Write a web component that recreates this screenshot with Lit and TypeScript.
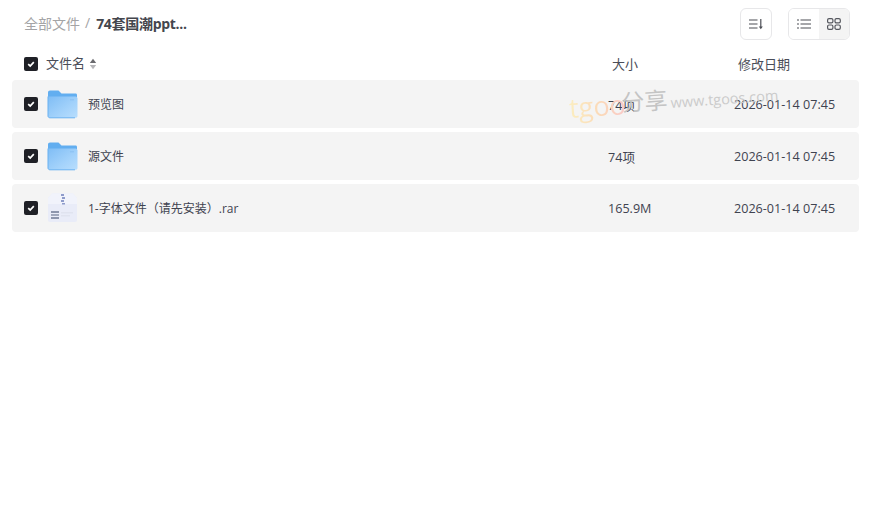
import { LitElement, html, css } from "lit";
import { customElement } from "lit/decorators.js";

const check = html`<span class="cb"><svg width="14" height="14" viewBox="0 0 14 14"><path d="M4.200 7.200 6.200 9 9.800 5.200" fill="none" stroke="#fff" stroke-width="1.700"/></svg></span>`;

const folder = html`<svg class="ic" width="31" height="30" viewBox="0 0 31 30">
  <defs><linearGradient id="fg" x1="0" y1="0" x2="1" y2="1"><stop offset="0" stop-color="#7fbdf5"/><stop offset="0.6" stop-color="#a3d2fb"/><stop offset="1" stop-color="#b9defd"/></linearGradient></defs>
  <path d="M1 3.500C1 2.400 1.800 1.500 3 1.500h8.500l3 3H28.500c1 0 1.500.6 1.500 1.500v3H1z" fill="#62aef0"/>
  <path d="M1 7.500h27.500c1 0 2 .8 2 2V27c0 1-.8 1.800-2 1.800H3c-1.200 0-2-.8-2-1.800z" fill="url(#fg)"/>
  <path d="M1 7.500V27c0 1 .8 1.800 2 1.800h25" fill="none" stroke="#69b1f1" stroke-width="1"/>
  <rect x="23" y="10" width="4" height="1.400" fill="#8fc4f4"/>
</svg>`;

const archive = html`<svg class="ic" width="31" height="32" viewBox="0 0 31 32">
  <path d="M1 6 5 1.500h21L30 6v22c0 1.200-.8 2-2 2H3c-1.200 0-2-.8-2-2z" fill="#e9ecf8"/>
  <path d="M1 6 5 1.500h21L30 6v6H1z" fill="#f1f3fb"/>
  <path d="M14 2h3v2h-3zM15 5h3v2h-3zM14 8h3v2h-3zM15 11h3v1.500h-3z" fill="#8f9ccb"/>
  <rect x="4" y="19" width="8" height="2" fill="#8d96ad"/><rect x="4" y="22" width="8" height="2" fill="#a1a9bd"/><rect x="4" y="25" width="8" height="2" fill="#8d96ad"/>
  <rect x="14" y="20" width="12" height="1.500" fill="#e0e3ef"/><rect x="14" y="23" width="9" height="1.500" fill="#e0e3ef"/>
</svg>`;

const rows = [
  { icon: folder, name: "预览图", size: "74项" },
  { icon: folder, name: "源文件", size: "74项" },
  { icon: archive, name: "1-字体文件（请先安装）.rar", size: "165.9M" },
];
const date = "2026-01-14 07:45";

@customElement("app-root")
export class AppRoot extends LitElement {
  static styles = css`
    :host { display: block; position: relative; width: 874px; height: 514px; background: #fff; overflow: hidden;
      font-family: "Open Sans", "Noto Sans CJK SC", sans-serif; color: #3f4350; font-size: 12px; }
    .wrap { padding: 8px 15px 0 12px; }
    .top { display: flex; align-items: center; height: 32px; padding: 0 9px 0 12px; }
    .crumb { flex: 1; display: flex; align-items: center; font-size: 14px; padding-bottom: 3px; }
    .crumb .root { color: #a4a4a6; }
    .crumb .sep { color: #a4a4a6; margin: 0 6px 0 5px; }
    .crumb .cur { color: #44464d; font-weight: 700; letter-spacing: -0.3px; }
    .btn { box-sizing: border-box; width: 32px; height: 32px; border: 1px solid #e7e7e9; border-radius: 6px; display: flex; align-items: center; justify-content: center; }
    .seg { box-sizing: border-box; margin-left: 16px; width: 62px; height: 32px; border: 1px solid #e7e7e9; border-radius: 6px; display: flex; overflow: hidden; }
    .seg span { flex: 1; display: flex; align-items: center; justify-content: center; }
    .seg .off { background: #f4f4f4; }
    .seg .on { background: #fff; }
    .grid { display: grid; grid-template-columns: 584px 126px 1fr; align-items: center; }
    .head { box-sizing: border-box; height: 40px; padding: 8px 0 0 12px; color: #4a4d58; font-size: 13px; }
    .head .n { display: flex; align-items: center; }
    .head .n b { font-weight: 400; margin-left: 8px; line-height: 16px; margin-top: -2px; }
    .head .sort { margin-left: 4px; }
    .head .s { padding: 0 0 2px 4px; }
    .head .d { padding: 0 0 2px 4px; }
    .list { display: flex; flex-direction: column; gap: 4px; }
    .row { height: 48px; padding-left: 12px; background: #f4f4f4; border-radius: 4px; }
    .row .n { display: flex; align-items: center; }
    .row .ic { margin-left: 9px; flex: none; }
    .row .t { margin-left: 10px; }
    .row .m { font-size: 12.6px; }
    .cb { width: 14px; height: 14px; border-radius: 2px; background: #1f2026; display: inline-flex; flex: none; }
    .wm { position: absolute; left: 570px; top: 86px; display: flex; align-items: baseline; gap: 4px; transform: rotate(-4deg); transform-origin: left bottom; pointer-events: none; white-space: nowrap; }
    .wm .a { font-size: 27px; background: linear-gradient(90deg, #fbeec0, #fbd9b8 55%, #f9c9c9); -webkit-background-clip: text; background-clip: text; color: transparent; transform: translateY(3px); }
    .wm .b { font-size: 23px; color: #c4c4c4; margin-left: -8px; }
    .wm .c { font-size: 14.500px; color: #cbcbcb; margin-left: -1px; }
  `;

  render() {
    return html`
      <div class="wrap">
        <div class="top">
          <div class="crumb"><span class="root">全部文件</span><span class="sep">/</span><span class="cur">74套国潮ppt...</span></div>
          <div class="btn"><svg width="16" height="14" viewBox="0 0 16 14"><path d="M1 3h8.500M1 7h8.500M1 11h8.500M12.800 2v9" fill="none" stroke="#4c4e55" stroke-width="1.200"/><path d="M10.800 9.500h4l-2 2.700z" fill="#4c4e55"/></svg></div>
          <div class="seg">
            <span class="on"><svg width="14" height="12" viewBox="0 0 14 12"><path d="M3.500 2H14M3.500 6H14M3.500 10H14M0 2h2M0 6h2M0 10h2" fill="none" stroke="#4c4e55" stroke-width="1.200"/></svg></span>
            <span class="off"><svg width="14" height="12" viewBox="0 0 14 12"><g fill="none" stroke="#55575e" stroke-width="1.200"><rect x=".6" y=".6" width="5.300" height="4.300" rx="1.400"/><rect x="8" y=".6" width="5.300" height="4.300" rx="1.400"/><rect x=".6" y="7" width="5.300" height="4.300" rx="1.400"/><rect x="8" y="7" width="5.300" height="4.300" rx="1.400"/></g></svg></span>
          </div>
        </div>
        <div class="grid head">
          <div class="n">${check}<b>文件名</b><svg class="sort" width="8" height="12" viewBox="0 0 8 12"><path d="M4 .8 7.200 5H.8z" fill="#6a6a6e"/><path d="M4 11.200 7.200 7H.8z" fill="#b5b5b8"/></svg></div>
          <div class="s">大小</div>
          <div class="d">修改日期</div>
        </div>
        <div class="list">
          ${rows.map((r) => html`
            <div class="grid row">
              <div class="n">${check}${r.icon}<span class="t">${r.name}</span></div>
              <div class="m">${r.size}</div>
              <div class="m">${date}</div>
            </div>`)}
        </div>
      </div>
      <div class="wm"><span class="a">tgoo</span><span class="b">分享</span><span class="c">www.tgoos.com</span></div>
    `;
  }
}
